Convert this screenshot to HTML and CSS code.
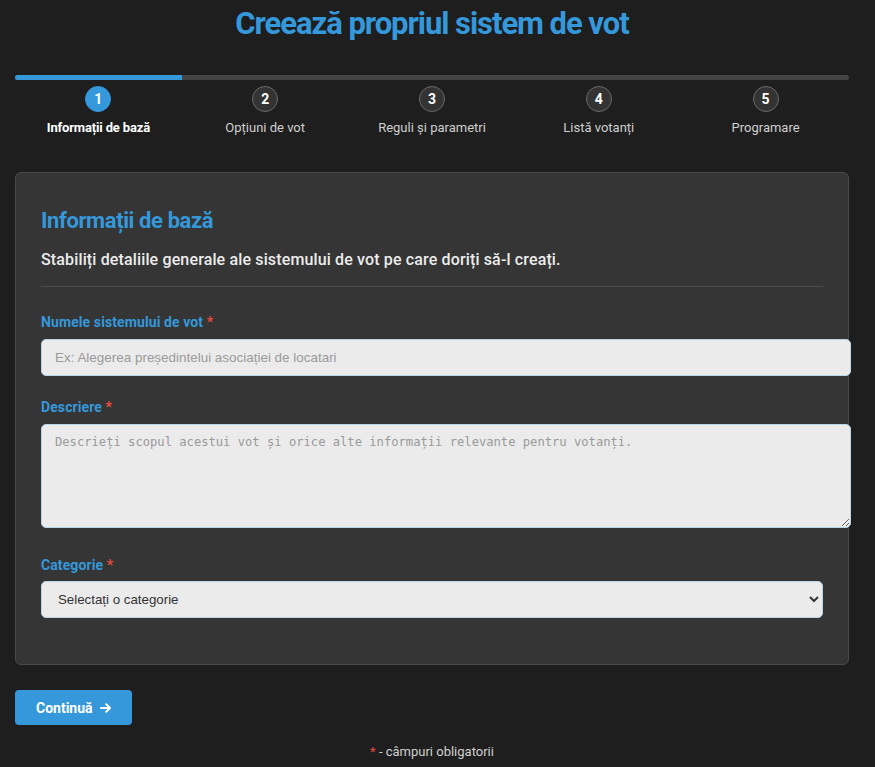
FILE: index.html
```html
<!DOCTYPE html>
<html lang="ro">
<head>
<meta charset="utf-8">
<title>Creează propriul sistem de vot</title>
<link rel="stylesheet" href="styles.css">
</head>
<body>
<div class="page">
  <h1 class="title">Creează propriul sistem de vot</h1>

  <div class="progress">
    <div class="track"><div class="fill" style="width:20%"></div></div>
    <ol class="steps">
      <li class="step active"><span class="num">1</span><span class="label">Informații de bază</span></li>
      <li class="step"><span class="num">2</span><span class="label">Opțiuni de vot</span></li>
      <li class="step"><span class="num">3</span><span class="label">Reguli și parametri</span></li>
      <li class="step"><span class="num">4</span><span class="label">Listă votanți</span></li>
      <li class="step"><span class="num">5</span><span class="label">Programare</span></li>
    </ol>
  </div>

  <section class="card">
    <h2 class="card-title">Informații de bază</h2>
    <p class="card-sub">Stabiliți detaliile generale ale sistemului de vot pe care doriți să-l creați.</p>
    <hr class="divider">

    <div class="group">
      <label class="field-label" for="name">Numele sistemului de vot <span class="req">*</span></label>
      <input id="name" class="text-input" type="text" placeholder="Ex: Alegerea președintelui asociației de locatari">
    </div>

    <div class="group group-area">
      <label class="field-label" for="desc">Descriere <span class="req">*</span></label>
      <textarea id="desc" class="text-area" placeholder="Descrieți scopul acestui vot și orice alte informații relevante pentru votanți."></textarea>
    </div>

    <div class="group group-last">
      <label class="field-label field-label-tight" for="cat">Categorie <span class="req">*</span></label>
      <select id="cat" class="select">
        <option>Selectați o categorie</option>
      </select>
    </div>
  </section>

  <button class="btn" type="button">Continuă <svg class="arrow" width="12" height="12" viewBox="0 0 12 12" aria-hidden="true"><path d="M1 6h9M6.2 2.2 10 6l-3.8 3.8" fill="none" stroke="#fff" stroke-width="2" stroke-linecap="round" stroke-linejoin="round"/></svg></button>

  <p class="footnote"><span class="req">*</span> - câmpuri obligatorii</p>
</div>
</body>
</html>
```

FILE: styles.css
```css
* { box-sizing: border-box; }

html, body {
  margin: 0;
  background: #1e1e1e;
  font-family: Roboto, "Noto Sans", Arial, sans-serif;
  color: #e6e6e6;
}

.page {
  width: 834px;
  margin: 0 0 0 15px;
}

.title {
  margin: 6px 0 0;
  text-align: center;
  font-size: 31px;
  line-height: 36px;
  font-weight: 700;
  letter-spacing: -1.05px;
  color: #3498db;
}

.progress {
  margin-top: 33px;
}

.track {
  height: 5px;
  background: #444;
  border-radius: 3px;
  overflow: hidden;
}

.fill {
  height: 100%;
  background: #3498db;
}

.steps {
  list-style: none;
  margin: 6px 0 0;
  padding: 0;
  display: grid;
  grid-template-columns: repeat(5, 1fr);
}

.step {
  display: flex;
  flex-direction: column;
  align-items: center;
  gap: 8px;
}

.num {
  width: 26px;
  height: 26px;
  border-radius: 50%;
  border: 1.5px solid #6a6a6a;
  background: #333;
  color: #fff;
  font-weight: 700;
  font-size: 14px;
  display: flex;
  align-items: center;
  justify-content: center;
}

.label {
  font-size: 13px;
  line-height: 16px;
  color: #cfcfcf;
}

.step.active .num {
  background: #3498db;
  border-color: #3498db;
}

.step.active .label {
  color: #fff;
  font-weight: 700;
  letter-spacing: -0.15px;
}

.card {
  margin-top: 36px;
  background: #353535;
  border: 1px solid #4a4a4a;
  border-radius: 6px;
  padding: 25px;
}

.card-title {
  margin: 10px 0 0;
  font-size: 22px;
  line-height: 26px;
  font-weight: 700;
  letter-spacing: -0.4px;
  color: #3498db;
}

.card-sub {
  margin: 16px 0 0;
  font-size: 16px;
  line-height: 20px;
  font-weight: 500;
  letter-spacing: 0.14px;
  color: #ececec;
}

.divider {
  margin: 16px 0 0;
  border: 0;
  border-top: 1px solid #4b4b4b;
}

.group {
  margin-top: 27px;
}

.group-area {
  margin-top: 23px;
}

.group-last {
  margin-top: 29px;
  margin-bottom: 21px;
}

.field-label {
  display: block;
  margin-bottom: 9px;
  font-size: 14px;
  line-height: 16px;
  font-weight: 700;
  color: #3498db;
  letter-spacing: 0.1px;
}

.field-label-tight {
  margin-bottom: 8px;
}

.req {
  color: #e74c3c;
}

.text-input,
.text-area {
  display: block;
  box-sizing: content-box;
  width: 100%;
  margin: 0;
  background: #ebebeb;
  border: 1px solid #b9d5e8;
  border-radius: 5px;
  color: #333;
}

.text-input {
  height: 15px;
  padding: 10px 13px;
  font-family: "Liberation Sans", Arial, sans-serif;
  font-size: 13.45px;
}

.text-input::placeholder {
  color: #9a9a9a;
}

.text-area {
  height: 82px;
  padding: 10px 13px;
  font-family: "DejaVu Sans Mono", "Liberation Mono", monospace;
  font-size: 12.15px;
  line-height: 15px;
  resize: vertical;
}

.text-area::placeholder {
  color: #9a9a9a;
}

.select {
  display: block;
  width: 100%;
  height: 37px;
  margin: 0;
  padding: 0 12px;
  background: #ebebeb;
  border: 1px solid #b9d5e8;
  border-radius: 5px;
  color: #333;
  font-family: "Liberation Sans", Arial, sans-serif;
  font-size: 13.3px;
}

.btn {
  margin-top: 25px;
  height: 35px;
  padding: 0 20px 0 21px;
  border: 0;
  border-radius: 4px;
  background: #3498db;
  color: #fff;
  font-family: Roboto, Arial, sans-serif;
  font-size: 14px;
  font-weight: 700;
  display: inline-flex;
  align-items: center;
  gap: 7px;
}

.arrow {
  display: block;
}

.footnote {
  margin: 19px 0 0;
  text-align: center;
  font-size: 13px;
  line-height: 16px;
  color: #cfcfcf;
}
```
